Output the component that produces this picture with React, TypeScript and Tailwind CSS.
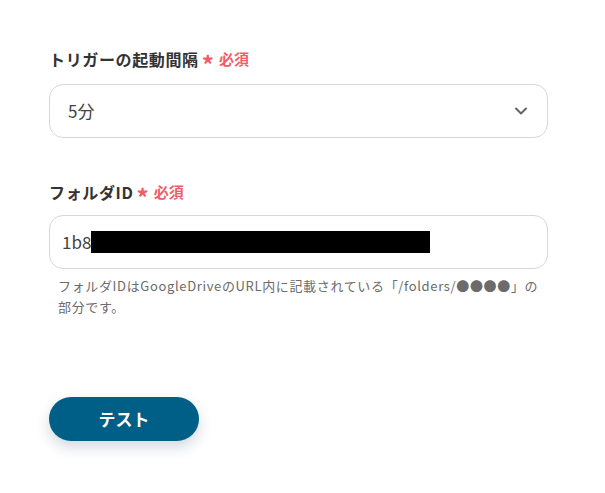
import { ChevronDown } from "lucide-react";

const font = { fontFamily: '"Noto Sans CJK JP", "Noto Sans", sans-serif' };

function Label({ text }: { text: string }) {
  return (
    <div className="flex items-center h-[20px]">
      <span className="text-[16px] font-bold tracking-[0.04em] text-[#333333]">{text}</span>
      <span className="ml-[3px] text-[24px] font-bold text-[#f25c66] leading-none mt-[10px]">*</span>
      <span className="ml-[5px] text-[15px] font-bold text-[#f25c66]">必須</span>
    </div>
  );
}

export default function App() {
  return (
    <main className="w-[605px] h-[493px] bg-white pl-[49px] pr-[57px] pt-[49px]" style={font}>
      <Label text="トリガーの起動間隔" />
      <div className="mt-[15px] h-[54px] rounded-[14px] border border-[#d4d7e0] flex items-center pl-[18px] pr-[16px]">
        <span className="text-[17px] text-[#444444] flex-1">5分</span>
        <ChevronDown size={20} strokeWidth={2.5} className="text-[#666666]" />
      </div>

      <div className="mt-[44px]">
        <Label text="フォルダID" />
      </div>
      <div className="mt-[13px] h-[54px] rounded-[14px] border border-[#d4d7e0] flex items-center pl-[12px]">
        <span className="text-[17px] text-[#444444]">1b8</span>
        <span className="block w-[339px] h-[22px] bg-black"></span>
      </div>
      <p className="mt-[6px] pl-[9px] pr-[4px] text-[13px] tracking-[0.05em] leading-[21px] text-[#6b6b6b]">
        フォルダIDはGoogleDriveのURL内に記載されている「/folders/●●●●」の部分です。
      </p>

      <button className="mt-[80px] w-[150px] h-[44px] rounded-full bg-[#005f87] text-white text-[17px] font-bold shadow-[0_6px_14px_rgba(0,40,80,0.18)]">
        テスト
      </button>
    </main>
  );
}
